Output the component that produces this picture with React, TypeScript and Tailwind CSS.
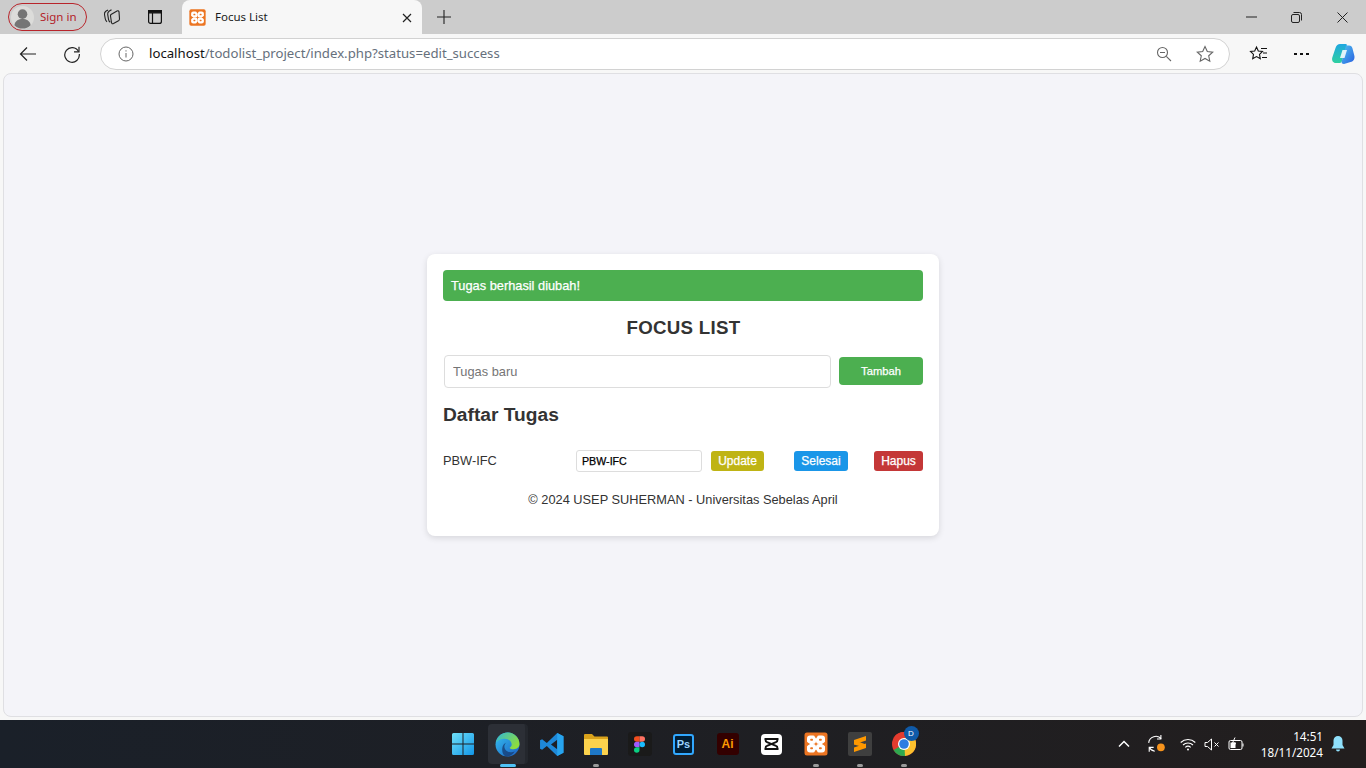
import React from 'react';

const Xampp = ({ size }: { size: number }) => (
  <svg width={size} height={size} viewBox="0 0 24 24">
    <rect x="0.500" y="0.500" width="23" height="23" rx="2.500" fill="#ec7522" />
    <g fill="#fff">
      <rect x="3" y="3.500" width="9" height="8.500" rx="3" />
      <rect x="12" y="3.500" width="9" height="8.500" rx="3" />
      <rect x="3" y="12" width="9" height="8.500" rx="3" />
      <rect x="12" y="12" width="9" height="8.500" rx="3" />
    </g>
    <g fill="#ec7522">
      <rect x="6.200" y="6.800" width="2.800" height="2" rx="0.800" />
      <rect x="15" y="6.800" width="2.800" height="2" rx="0.800" />
      <rect x="6.200" y="15.200" width="2.800" height="2" rx="0.800" />
      <rect x="15" y="15.200" width="2.800" height="2" rx="0.800" />
      <path d="M10 3.500h4L12 6.500zM10 20.500h4L12 17.500zM3 10v4L6 12zM21 10v4L18 12z" />
    </g>
  </svg>
);

const TabStrip = () => (
  <div className="flex h-[34px] shrink-0 items-center bg-[#cccccc]">
    <div className="ml-2 flex h-[28px] w-[79px] items-center rounded-full border border-[#b8252b] pl-[2px]">
      <svg width="23" height="23" viewBox="0 0 24 24">
        <circle cx="12" cy="12" r="12" fill="#dcdcda" />
        <circle cx="12" cy="8.500" r="5" fill="#757575" />
        <path d="M3.500 20c1-5 4.500-6.500 8.500-6.500s7.500 1.500 8.500 6.500a12 12 0 0 1-17 0z" fill="#757575" />
      </svg>
      <span className="ml-[6px] font-['Noto_Sans',sans-serif] text-[11.500px] text-[#b3232a]">Sign in</span>
    </div>
    <div className="ml-[15px] flex w-[20px] justify-center">
      <svg width="18" height="18" viewBox="0 0 18 18" fill="none" stroke="#222" strokeWidth="1.100">
        <path d="M5 2 2.800 3.300C1.800 4 1.300 5 1.500 6.500l.8 4.500c.2 1 .8 2 1.700 2.700" />
        <path d="M8.500 1.700 6 3.200C5 4 4.500 5 4.700 6.300l.8 5c.2 1.200.8 2.300 1.800 3" />
        <path d="M8 6.500l6-3.500c.8-.4 1.700-.2 2 .6l.5 7.400c0 .8-.3 1.400-1 1.800l-5 2.700c-1 .5-1.800.2-2-1L7.500 8c-.1-.6.100-1.100.5-1.500z" />
      </svg>
    </div>
    <div className="ml-[23px] flex w-[20px] justify-center">
      <svg width="16" height="16" viewBox="0 0 16 16" fill="none" stroke="#111" strokeWidth="1.200">
        <rect x="1.600" y="1.600" width="12.800" height="12.800" rx="2" />
        <path d="M1.600 3.800h12.800V1.600H1.600z" fill="#111" />
        <path d="M5.500 4v10" />
      </svg>
    </div>
    <div className="relative ml-[17px] flex h-[34px] w-[240px] items-center rounded-t-[8px] bg-[#f7f7f7] pl-[7px]">
      <Xampp size={17} />
      <span className="ml-[9px] font-['Noto_Sans',sans-serif] text-[11.500px] text-[#1a1a1a]">Focus List</span>
      <svg className="absolute right-[10px] top-[13px]" width="10" height="10" viewBox="0 0 10 10" stroke="#222" strokeWidth="1.200">
        <path d="M1 1l8 8M9 1l-8 8" />
      </svg>
    </div>
    <svg className="ml-[14px]" width="16" height="16" viewBox="0 0 16 16" stroke="#222" strokeWidth="1.100">
      <path d="M8 1v14M1 8h14" />
    </svg>
    <div className="ml-auto flex items-center text-[#222]">
      <div className="flex w-[46px] justify-center">
        <svg width="11" height="2" viewBox="0 0 11 2" stroke="#222"><path d="M0 1h11" /></svg>
      </div>
      <div className="flex w-[46px] justify-center pr-[2px]">
        <svg width="11" height="11" viewBox="0 0 11 11" fill="none" stroke="#222">
          <rect x="0.500" y="2.500" width="8" height="8" rx="1.500" />
          <path d="M2.500 .5H8.500a2 2 0 0 1 2 2v6" />
        </svg>
      </div>
      <div className="flex w-[46px] justify-center pr-[1px]">
        <svg width="11" height="11" viewBox="0 0 11 11" stroke="#222"><path d="M.5.5l10 10M10.500.5l-10 10" /></svg>
      </div>
    </div>
  </div>
);

const Toolbar = () => (
  <div className="flex h-[39px] shrink-0 items-center bg-[#f7f7f7]">
    <svg className="ml-[19px]" width="18" height="16" viewBox="0 0 18 16" fill="none" stroke="#222" strokeWidth="1.200">
      <path d="M17 8H1.500M8 1.500 1.500 8 8 14.500" />
    </svg>
    <svg className="ml-[26px]" width="18" height="18" viewBox="0 0 18 18" fill="none" stroke="#222" strokeWidth="1.200">
      <path d="M15.500 6.500A7.300 7.300 0 1 0 16.300 9" />
      <path d="M16 1.800v5h-5" />
    </svg>
    <div className="ml-[19px] flex h-[32px] w-[1130px] items-center rounded-full border border-[#d2d2d2] bg-white pl-[17px]">
      <svg width="16" height="16" viewBox="0 0 16 16" fill="none" stroke="#666" strokeWidth="1">
        <circle cx="8" cy="8" r="7" />
        <path d="M8 7v4.500M8 4.300v1.200" />
      </svg>
      <span className="ml-[15px] mt-[1px] font-['Noto_Sans',sans-serif] text-[13.190px] text-[#66707c]"><span className="text-[#111]">localhost</span>/todolist_project/index.php?status=edit_success</span>
      <svg className="ml-auto" width="16" height="16" viewBox="0 0 16 16" fill="none" stroke="#666" strokeWidth="1.100">
        <circle cx="6.500" cy="6.500" r="5" />
        <path d="M4 6.500h5M10.300 10.300 15 15" />
      </svg>
      <svg className="ml-[24px] mr-[15px]" width="18" height="18" viewBox="0 0 18 18" fill="none" stroke="#666" strokeWidth="1.100">
        <path d="M9 1.500l2.300 5 5.400.6-4 3.700 1.100 5.400L9 13.500l-4.800 2.700 1.100-5.400-4-3.700 5.400-.6z" />
      </svg>
    </div>
    <svg className="ml-[19px]" width="19" height="18" viewBox="0 0 19 18" fill="none" stroke="#111" strokeWidth="1.100">
      <path d="M7.500 2l1.800 4 4.200.5-3 2.900.8 4.300-3.800-2.100-3.800 2.100.8-4.300-3-2.900 4.200-.5z" />
      <path d="M12 3.500h6M14 8h4M13 12.500h5" />
    </svg>
    <div className="ml-[26px] flex gap-[3px]">
      <div className="h-[2px] w-[3px] bg-[#111]" />
      <div className="h-[2px] w-[3px] bg-[#111]" />
      <div className="h-[2px] w-[3px] bg-[#111]" />
    </div>
    <svg className="ml-[22px]" width="24" height="24" viewBox="0 0 24 24">
      <defs>
        <linearGradient id="copA" x1="0" y1="0" x2="0" y2="1">
          <stop offset="0" stopColor="#1fa7e0" />
          <stop offset="1" stopColor="#2fd0a0" />
        </linearGradient>
        <linearGradient id="copB" x1="0" y1="0" x2="1" y2="1">
          <stop offset="0" stopColor="#4fc3f0" />
          <stop offset="1" stopColor="#2a5fe0" />
        </linearGradient>
      </defs>
      <path d="M9 2h5.500c1 0 1.600.7 1.300 1.700L11 19c-.5 1.500-1.500 2-2.800 2H5C2 21 .5 18.500 1.300 15.500L4.500 6C5.300 3.500 7 2 9 2z" fill="url(#copA)" />
      <path d="M15 3.500h3c2 0 3 1.300 3.500 3l1.800 7c.7 3-.5 6-3.800 6.500L13 22c-2 0-2.700-1-2.300-2.500z" fill="url(#copB)" />
      <path d="M11.500 8h4.500l-2.500 8H9z" fill="#fff" opacity="0.85" />
    </svg>
  </div>
);

const Card = () => (
  <div className="flex w-[512px] flex-col rounded-[8px] bg-white p-4 pb-[28px] text-[12.800px] shadow-[0_2px_6px_rgba(0,0,0,0.12)]">
    <div className="flex h-[31px] items-center rounded-[4px] bg-[#4caf50] px-2 text-white [-webkit-text-stroke:0.25px_white]">Tugas berhasil diubah!</div>
    <h1 className="mt-[16px] pl-[1px] text-center text-[18.700px] leading-[22px] font-bold tracking-[0.300px] text-[#333]">FOCUS LIST</h1>
    <div className="mt-[16px] flex items-start pl-px">
      <input
        readOnly
        placeholder="Tugas baru"
        className="h-[33px] w-[387px] rounded-[4px] border border-[#dddddd] bg-white px-2 text-[12.800px] placeholder:text-[#757575]"
      />
      <button className="ml-2 mt-[2px] h-[28px] w-[84px] rounded-[4px] bg-[#4caf50] text-[11.200px] text-white [-webkit-text-stroke:0.25px_white]">Tambah</button>
    </div>
    <h2 className="mt-[15px] text-[19.200px] leading-[23px] font-bold text-[#333]">Daftar Tugas</h2>
    <div className="mt-[24px] flex h-[22px] items-center text-[#333]">
      <span className="w-[133px]">PBW-IFC</span>
      <input
        readOnly
        value="PBW-IFC"
        className="h-[22px] w-[126px] rounded-[3px] border border-[#dddddd] bg-white px-[5px] text-[10.670px] text-black [-webkit-text-stroke:0.25px_black]"
      />
      <button className="ml-[9px] h-[20px] w-[53px] rounded-[3px] bg-[#bfb414] text-[12px] text-white [-webkit-text-stroke:0.25px_white]">Update</button>
      <button className="ml-[30px] h-[20px] w-[54px] rounded-[3px] bg-[#1a96e8] text-[12px] text-white [-webkit-text-stroke:0.25px_white]">Selesai</button>
      <button className="ml-[26px] h-[20px] w-[49px] rounded-[3px] bg-[#c43737] text-[12px] text-white [-webkit-text-stroke:0.25px_white]">Hapus</button>
    </div>
    <p className="mt-[20px] text-center leading-[16px] text-[#333]">© 2024 USEP SUHERMAN - Universitas Sebelas April</p>
  </div>
);

const Dot = ({ wide }: { wide?: boolean }) => (
  <div className={wide ? 'absolute bottom-[1px] left-[14px] h-[3px] w-[16px] rounded-full bg-[#4fc3f7]' : 'absolute bottom-[1px] left-[19px] h-[3px] w-[6px] rounded-full bg-[#9a9a9a]'} />
);

const TaskIcon = ({ children, dot }: { children: React.ReactNode; dot?: boolean }) => (
  <div className="relative flex h-[48px] w-[44px] items-center justify-center">
    {children}
    {dot && <Dot />}
  </div>
);

const Taskbar = () => (
  <div className="grid h-[48px] shrink-0 grid-cols-[1fr_auto_1fr] items-center bg-gradient-to-r from-[#1a2029] to-[#221e1e]">
    <div />
    <div className="flex items-center pl-[1px]">
      <TaskIcon>
        <svg className="-ml-[2px]" width="24" height="24" viewBox="0 0 24 24">
          <defs>
            <linearGradient id="win" x1="0" y1="0" x2="1" y2="1">
              <stop offset="0" stopColor="#6fe0f8" />
              <stop offset="1" stopColor="#1296e8" />
            </linearGradient>
          </defs>
          <path d="M1 2.500A1.500 1.500 0 0 1 2.500 1h9v10.500H1zM12.500 1h9A1.500 1.500 0 0 1 23 2.500v9H12.500zM1 12.500h10.500V23h-9A1.500 1.500 0 0 1 1 21.500zM12.500 12.500H23v9a1.500 1.500 0 0 1-1.500 1.500h-9z" fill="url(#win)" />
        </svg>
      </TaskIcon>
      <div className="relative flex h-[48px] w-[44px] items-center justify-center">
        <div className="flex h-[40px] w-[40px] items-center justify-center rounded-[4px] border-r-[3px] border-[#24272d] bg-[#2c2f36]">
          <svg className="ml-[2px]" width="25" height="25" viewBox="0 0 24 24">
            <defs>
              <linearGradient id="edgeA" x1="0" y1="0" x2="1" y2="1">
                <stop offset="0" stopColor="#35c1f1" />
                <stop offset="1" stopColor="#1b5fc4" />
              </linearGradient>
              <linearGradient id="edgeB" x1="0" y1="0" x2="1" y2="0.600">
                <stop offset="0" stopColor="#2fb8d8" />
                <stop offset="1" stopColor="#8ede3a" />
              </linearGradient>
            </defs>
            <circle cx="12" cy="12" r="11.500" fill="url(#edgeA)" />
            <path d="M1 10C2.500 4 7 .5 12 .5c6.500 0 11.500 5 11.500 11 0 3-2.500 5-5.500 5-2 0-3.500-.5-4-1.500 2-1 2.500-3 1.500-5C14 7 11 6 8 6.500 5 7 2.500 8 1 10z" fill="url(#edgeB)" />
            <path d="M9 14c0 3 2.500 5.500 6 5.500 1.500 0 3-.4 4-1-1.500 3-4.500 5-8 5C8 23.500 6.500 19 7 15.500 7.200 13 8.500 11 11 10c-1.200 1-2 2.500-2 4z" fill="#16396f" opacity="0.75" />
          </svg>
        </div>
        <Dot wide />
      </div>
      <TaskIcon>
        <svg width="25" height="25" viewBox="0 0 24 24">
          <path d="M17.500 1 23.500 4v16l-6 3L7.500 13.500 3 17l-2-1V8l2-1 4.500 3.500zm0 6.500L11.500 12l6 4.500z" fill="#1e88d8" fillRule="evenodd" />
          <path d="M17.500 1 23.500 4v16l-6 3z" fill="#27a4ee" />
        </svg>
      </TaskIcon>
      <TaskIcon dot>
        <svg width="24" height="22" viewBox="0 0 24 22">
          <path d="M0 2a1 1 0 0 1 1-1h7l2.500 2.500H23a1 1 0 0 1 1 1V8H0z" fill="#d9a21b" />
          <path d="M0 6h24v15a1 1 0 0 1-1 1H1a1 1 0 0 1-1-1z" fill="#fbd24d" />
          <path d="M7 15h10a1 1 0 0 1 1 1v6H6v-6a1 1 0 0 1 1-1z" fill="#1e78c8" />
        </svg>
      </TaskIcon>
      <TaskIcon>
        <div className="flex h-[24px] w-[24px] items-center justify-center rounded-[3px] bg-[#1a1a1a]">
          <svg width="11" height="17" viewBox="0 0 12 18">
            <path d="M3 0h3v6H3a3 3 0 0 1 0-6z" fill="#f24e1e" />
            <path d="M6 0h3a3 3 0 0 1 0 6H6z" fill="#ff7262" />
            <path d="M3 6h3v6H3a3 3 0 0 1 0-6z" fill="#a259ff" />
            <circle cx="9" cy="9" r="3" fill="#1abcfe" />
            <path d="M3 12h3v3a3 3 0 1 1-3-3z" fill="#0acf83" />
          </svg>
        </div>
      </TaskIcon>
      <TaskIcon>
        <div className="flex h-[21px] w-[21px] items-center justify-center rounded-[3px] border-2 border-[#31a8ff] bg-[#001e36] text-[11px] font-bold text-[#9bd4ff]">Ps</div>
      </TaskIcon>
      <TaskIcon>
        <div className="flex h-[22px] w-[22px] items-center justify-center rounded-[3px] bg-[#330000] text-[12px] font-bold text-[#ff9a00]">Ai</div>
      </TaskIcon>
      <TaskIcon>
        <div className="flex h-[21px] w-[21px] items-center justify-center rounded-[4px] bg-white">
          <svg width="15" height="12" viewBox="0 0 15 12" fill="none" stroke="#111" strokeWidth="1.900">
            <path d="M14.500 1H3C1.300 1 1 3.500 3 4.200L12 7.800C14 8.500 13.700 11 12 11H.5" />
            <path d="M14.500 11H3C1.300 11 1 8.500 3 7.800L12 4.200C14 3.500 13.700 1 12 1H.5" />
          </svg>
        </div>
      </TaskIcon>
      <TaskIcon dot>
        <Xampp size={24} />
      </TaskIcon>
      <TaskIcon dot>
        <div className="flex h-[24px] w-[24px] items-center justify-center rounded-[2px] bg-[#3f3f3f]">
          <svg width="14" height="18" viewBox="0 0 14 18" fill="#ff9800">
            <path d="M13 1v4.500L1 9.500V5z" />
            <path d="M1 5l12 4.500v3.500L1 9.500z" />
            <path d="M13 8.500V13L1 17v-4.500z" />
          </svg>
        </div>
      </TaskIcon>
      <TaskIcon dot>
        <div className="relative">
          <svg width="24" height="24" viewBox="0 0 24 24">
            <circle cx="12" cy="12" r="12" fill="#e33b2e" />
            <path d="M12 12 1.600 18A12 12 0 0 0 12 24c1 0 1.500 0 2-.2z" fill="#2fa84f" />
            <path d="M12 6h10.500A12 12 0 0 1 13 24z" fill="#fbc02d" />
            <path d="M12 6h10.500A12 12 0 0 0 12 0 12 12 0 0 0 2.500 4.500L7 12z" fill="#e33b2e" />
            <circle cx="12" cy="12" r="6" fill="#fff" />
            <circle cx="12" cy="12" r="4.800" fill="#2f7de1" />
          </svg>
          <div className="absolute left-[12px] top-[-6px] flex h-[15px] w-[15px] items-center justify-center rounded-full bg-[#0f5aa8] text-[8px] text-white">D</div>
        </div>
      </TaskIcon>
    </div>
    <div className="flex items-center justify-end text-white">
      <svg width="12" height="8" viewBox="0 0 12 8" fill="none" stroke="#fff" strokeWidth="1.500">
        <path d="M1 6.500 6 1.500l5 5" />
      </svg>
      <svg className="ml-[17px]" width="20" height="20" viewBox="0 0 18 18" fill="none" stroke="#fff" strokeWidth="1">
        <path d="M1.500 8A6.500 6.500 0 0 1 13 4.500M12.500 1v3.500H9" />
        <path d="M2 12a6.500 6.500 0 0 0 5 3.500M2 16v-4h4" />
        <circle cx="12.500" cy="12" r="3.500" fill="#f7941d" stroke="none" />
      </svg>
      <svg className="ml-[13px]" width="16" height="13" viewBox="0 0 16 13" fill="none" stroke="#fff" strokeWidth="1.100">
        <path d="M.7 4.500a10.500 10.500 0 0 1 14.600 0M3 7a7.200 7.200 0 0 1 10 0M5.300 9.300a4 4 0 0 1 5.400 0" />
        <circle cx="8" cy="11.500" r="1" fill="#fff" stroke="none" />
      </svg>
      <svg className="ml-[8px]" width="16" height="13" viewBox="0 0 16 13" fill="none" stroke="#fff" strokeWidth="1">
        <path d="M1 4.500h2.500L7.500 1v11L3.500 8.500H1z" />
        <path d="M10.500 4.500l4 4M14.500 4.500l-4 4" />
      </svg>
      <svg className="ml-[8px]" width="17" height="14" viewBox="0 0 17 14" fill="none" stroke="#fff" strokeWidth="1">
        <rect x="1" y="3.500" width="13" height="9" rx="1.500" />
        <path d="M15 6.500v3" />
        <path d="M2.500 5.500h5v5.500h-5z" fill="#fff" stroke="none" />
        <path d="M7 .5 4.500 6h3L6 9" />
      </svg>
      <div className="ml-[16px] flex flex-col items-end font-['Noto_Sans',sans-serif] text-[11.700px] leading-[16px] text-white">
        <span>14:51</span>
        <span>18/11/2024</span>
      </div>
      <svg className="ml-[8px] mr-[21px]" width="14" height="16" viewBox="0 0 14 16" fill="#8fe0fb">
        <path d="M7 0a4.500 4.500 0 0 1 4.500 4.500V9l2 3.500H.5L2.500 9V4.500A4.500 4.500 0 0 1 7 0z" />
        <path d="M5 13.500h4a2 2 0 0 1-4 0z" />
      </svg>
    </div>
  </div>
);

export default function App() {
  return (
    <div className="flex h-screen w-full flex-col overflow-hidden bg-white font-['Liberation_Sans',Arial,sans-serif]">
      <TabStrip />
      <Toolbar />
      <div className="flex min-h-0 flex-1 bg-[#f7f7f7] px-[3px] pb-[3px]">
        <main className="flex flex-1 items-center justify-center rounded-[8px] border border-[#dfdfe3] bg-[#f4f4f9]">
          <Card />
        </main>
      </div>
      <Taskbar />
    </div>
  );
}
